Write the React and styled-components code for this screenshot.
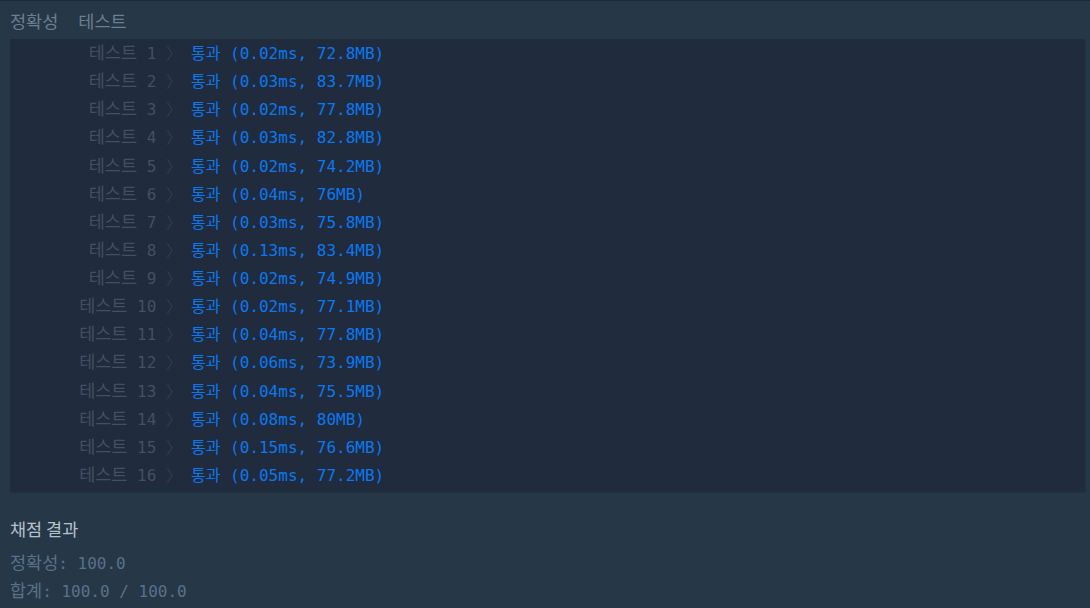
import React from "react";
import styled, { createGlobalStyle } from "styled-components";

const Global = createGlobalStyle`
  html, body { margin: 0; padding: 0; background: #263747; }
  body { font-family: "DejaVu Sans Mono", "Noto Sans CJK KR", monospace; }
`;

const Page = styled.div`
  width: 1090px;
  height: 608px;
  box-sizing: border-box;
  background: #263747;
  border-top: 1px solid #1e2a38;
  overflow: hidden;
`;

const Ko = styled.span`
  font-family: "Noto Sans CJK KR", sans-serif;
  font-size: ${(p) => p.$size || 17.5}px;
`;

const Heading = styled.div`
  display: flex;
  gap: 20px;
  height: 38px;
  align-items: center;
  padding-left: 10px;
  padding-top: 1px;
  box-sizing: border-box;
  color: #6b7f90;
`;

const Table = styled.div`
  margin-left: 10px;
  width: 1074px;
  background: #202b3d;
  box-shadow: 1px 1px 2px rgba(0, 0, 0, 0.25);
  padding-bottom: 2px;
`;

const Row = styled.div`
  display: grid;
  grid-template-columns: 172px 1fr;
  height: 28.125px;
  align-items: center;
  font-size: 16px;
  line-height: 20px;
`;

const Label = styled.div`
  text-align: right;
  color: #435062;
  white-space: pre;
`;

const Chevron = styled.span`
  color: #323d4e;
  font-family: "Noto Sans CJK KR", sans-serif;
`;

const Result = styled.div`
  padding-left: 9px;
  color: #0b78f0;
  white-space: pre;
`;

const Summary = styled.div`
  padding: 26px 10px 0;
  display: flex;
  flex-direction: column;
`;

const SummaryTitle = styled.div`
  font-size: 16px;
  color: #b6c2cb;
  height: 24px;
  line-height: 24px;
  margin-bottom: 7px;
`;

const SummaryLine = styled.div`
  font-size: 16px;
  color: #58728a;
  height: 28px;
  line-height: 28px;
`;

const rows = [
  ["1", "0.02ms, 72.8MB"],
  ["2", "0.03ms, 83.7MB"],
  ["3", "0.02ms, 77.8MB"],
  ["4", "0.03ms, 82.8MB"],
  ["5", "0.02ms, 74.2MB"],
  ["6", "0.04ms, 76MB"],
  ["7", "0.03ms, 75.8MB"],
  ["8", "0.13ms, 83.4MB"],
  ["9", "0.02ms, 74.9MB"],
  ["10", "0.02ms, 77.1MB"],
  ["11", "0.04ms, 77.8MB"],
  ["12", "0.06ms, 73.9MB"],
  ["13", "0.04ms, 75.5MB"],
  ["14", "0.08ms, 80MB"],
  ["15", "0.15ms, 76.6MB"],
  ["16", "0.05ms, 77.2MB"],
];

export default function App() {
  return (
    <Page>
      <Global />
      <Heading>
        <Ko>정확성</Ko>
        <Ko>테스트</Ko>
      </Heading>
      <Table>
        {rows.map(([n, r]) => (
          <Row key={n}>
            <Label>
              <Ko>테스트</Ko>
              {` ${n} `}
              <Chevron>〉</Chevron>
            </Label>
            <Result>
              <Ko $size={16}>통과</Ko>
              {` (${r})`}
            </Result>
          </Row>
        ))}
      </Table>
      <Summary>
        <SummaryTitle>
          <Ko>채점 결과</Ko>
        </SummaryTitle>
        <SummaryLine>
          <Ko>정확성</Ko>: 100.0
        </SummaryLine>
        <SummaryLine>
          <Ko>합계</Ko>: 100.0 / 100.0
        </SummaryLine>
      </Summary>
    </Page>
  );
}
